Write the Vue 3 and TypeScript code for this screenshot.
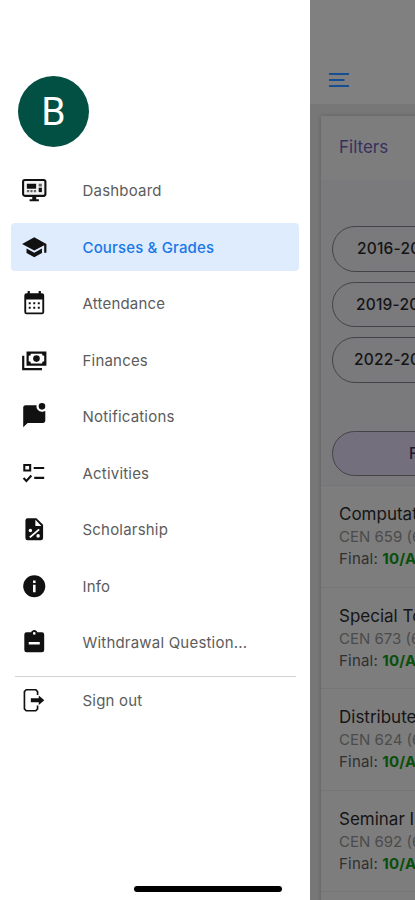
<script setup lang="ts">
interface MenuItem {
  label: string
  icon: string
  active?: boolean
}

interface Course {
  title: string
  code: string
  grade: string
}

const menu: MenuItem[] = [
  { label: 'Dashboard', icon: 'dashboard' },
  { label: 'Courses & Grades', icon: 'school', active: true },
  { label: 'Attendance', icon: 'calendar' },
  { label: 'Finances', icon: 'cash' },
  { label: 'Notifications', icon: 'message' },
  { label: 'Activities', icon: 'checklist' },
  { label: 'Scholarship', icon: 'percent' },
  { label: 'Info', icon: 'info' },
  { label: 'Withdrawal Question...', icon: 'clipboard' },
]

const years: string[] = ['2016-20', '2019-20', '2022-20']

const courses: Course[] = [
  { title: 'Computat', code: 'CEN 659 (6', grade: '10/A' },
  { title: 'Special To', code: 'CEN 673 (6', grade: '10/A' },
  { title: 'Distribute', code: 'CEN 624 (6', grade: '10/A' },
  { title: 'Seminar I', code: 'CEN 692 (6', grade: '10/A' },
]
</script>

<template>
  <div class="screen">
    <aside class="drawer">
      <div class="avatar">B</div>
      <nav class="menu">
        <a v-for="item in menu" :key="item.label" class="item" :class="{ active: item.active }">
          <svg class="icon" viewBox="0 0 24 24">
            <template v-if="item.icon === 'dashboard'">
              <rect x="1.9" y="2.7" width="20.2" height="14.4" rx="1.6" fill="#f4f4f4" stroke="#111" stroke-width="1.9" />
              <path d="M10.200 17h3.600v3.200h2.400v1.700H7.800v-1.700h2.400zM5.300 6h8.400v4.600H5.300z" />
              <path d="M16 6h2.900v2.600H16zM5.300 11.700h2.200v2H5.300zM8.500 11.700h2v2h-2zM11.600 11.700h2.100v2h-2.100z" fill="#666" />
              <path d="M16 9.700h2.900v4H16z" />
            </template>
            <path v-else-if="item.icon === 'school'" d="M12 3 1 9l11 6 9-4.910V17h2V9M5 13.180v4L12 21l7-3.820v-4L12 17z" />
            <template v-else-if="item.icon === 'calendar'">
              <path d="M19 3h-1V1h-2v2H8V1H6v2H5a2 2 0 0 0-2 2v15a2 2 0 0 0 2 2h14a2 2 0 0 0 2-2V5a2 2 0 0 0-2-2m.3 17.300H4.700V8.500h14.600z" />
              <path d="M7 11h1.800v1.800H7zM11.100 11h1.800v1.800h-1.800zM15.200 11H17v1.800h-1.800zM7 15.200h1.800V17H7zM11.100 15.200h1.800V17h-1.800zM15.200 15.200H17V17h-1.800z" />
            </template>
            <template v-else-if="item.icon === 'cash'">
              <path d="M5 4h18v13H5zM1 8h2v11h16v2H1z" />
              <path d="M9 6a2 2 0 0 1-2 2v5a2 2 0 0 1 2 2h10a2 2 0 0 1 2-2V8a2 2 0 0 1-2-2z" fill="#fff" />
              <circle cx="14" cy="10.500" r="3" />
            </template>
            <path v-else-if="item.icon === 'message'" d="M22 7v9c0 1.100-.9 2-2 2H6l-4 4V4c0-1.100.9-2 2-2h10.100a5 5 0 0 0 4.900 6c1.100 0 2.200-.4 3-1M16 3a3 3 0 1 0 6 0 3 3 0 1 0-6 0" />
            <path v-else-if="item.icon === 'checklist'" d="M3 4.500h5.300v5H3zM11.500 7.200H21M12 16.200h9M2.300 16.300l2.600 2.700 4.500-5" fill="none" stroke="#111" stroke-width="1.900" />
            <path v-else-if="item.icon === 'percent'" fill-rule="evenodd" d="M14 2H6a2 2 0 0 0-2 2v16a2 2 0 0 0 2 2h12a2 2 0 0 0 2-2V8zm-1 7V3.500L18.500 9zM8.500 11.500a1.600 1.600 0 1 0 0 3.200 1.600 1.600 0 0 0 0-3.200M15.900 11.500l1.100 1.100-8.400 7.400-1.200-1.100zM15.500 16.400a1.600 1.600 0 1 0 0 3.200 1.600 1.600 0 0 0 0-3.200" />
            <template v-else-if="item.icon === 'info'">
              <circle cx="12" cy="12" r="10" />
              <path d="M10.900 6.700h2.300v2.300h-2.300zM10.900 10.700h2.300v6.700h-2.300z" fill="#fff" />
            </template>
            <path v-else fill-rule="evenodd" d="M19 3h-4.180C14.400 1.840 13.300 1 12 1s-2.400.840-2.820 2H5a2 2 0 0 0-2 2v14a2 2 0 0 0 2 2h14a2 2 0 0 0 2-2V5a2 2 0 0 0-2-2m-7-.2a1.200 1.200 0 1 1 0 2.400 1.200 1.200 0 0 1 0-2.400M7 11.700h10v2.300H7z" />
          </svg>
          <span>{{ item.label }}</span>
        </a>
      </nav>
      <hr class="divider" />
      <a class="item signout">
        <svg class="icon" viewBox="0 0 24 24">
          <path d="M15 7.300V4.200L13.400 2.500H4.700L3.100 4.200v15.600l1.600 1.700h8.700l1.600-1.700v-3.100" fill="none" stroke="#111" stroke-width="1.500" />
          <path d="M8.900 10.300h7.200V7.800l5 4.200-5 4.200v-2.500H8.900z" />
        </svg>
        <span>Sign out</span>
      </a>
      <div class="home-bar"></div>
    </aside>

    <main class="page">
      <header class="topbar">
        <svg class="burger" viewBox="0 0 20 14">
          <path d="M0 1h20M0 7h15.500M0 13h20" stroke="#154f91" stroke-width="2" />
        </svg>
      </header>
      <section class="card">
        <h2 class="filters">Filters</h2>
        <div class="years">
          <button v-for="(year, i) in years" :key="year" class="pill" :class="'pill-' + i">{{ year }}</button>
          <button class="pill apply">F</button>
        </div>
        <article v-for="course in courses" :key="course.code" class="course">
          <h3>{{ course.title }}</h3>
          <p class="code">{{ course.code }}</p>
          <p class="final">Final: <b>{{ course.grade }}</b></p>
        </article>
      </section>
    </main>
  </div>
</template>

<style>
body {
  overflow: hidden;
}
</style>

<style scoped>
.screen {
  display: flex;
  width: 415px;
  height: 900px;
  overflow: hidden;
  background: #fff;
  font-family: Inter, "Liberation Sans", sans-serif;
}
.drawer {
  box-sizing: border-box;
  display: flex;
  flex-direction: column;
  flex: 0 0 310px;
  padding: 76px 11px 0;
  background: #fff;
}
.avatar {
  display: grid;
  place-items: center;
  width: 71px;
  height: 71px;
  margin-left: 7px;
  border-radius: 50%;
  background: #025043;
  color: #fff;
  font: 400 39px Roboto, sans-serif;
}
.menu {
  display: flex;
  flex-direction: column;
  gap: 8.500px;
  margin-top: 19.500px;
}
.item {
  display: flex;
  align-items: center;
  gap: 35.500px;
  flex: 0 0 48px;
  height: 48px;
  padding-left: 9.500px;
  border-radius: 4px;
  color: #5c5c5c;
  font-size: 15px;
  font-weight: 400;
  letter-spacing: 0.2px;
  white-space: nowrap;
}
.active {
  background: #dfecfd;
  color: #1878e8;
  font-weight: 500;
  letter-spacing: 0.150px;
}
.icon {
  flex: none;
  width: 26.500px;
  height: 26.500px;
  fill: #111;
}
.divider {
  flex: none;
  width: 281px;
  height: 1px;
  margin: 9px 0 0 4px;
  border: 0;
  background: #d2d2d2;
}
.home-bar {
  width: 148px;
  height: 6px;
  margin: auto 17px 8px auto;
  border-radius: 3px;
  background: #000;
}
.page {
  flex: 0 0 105px;
  overflow: hidden;
  background: #777;
}
.topbar {
  box-sizing: border-box;
  height: 104px;
  padding: 73px 0 0 19px;
  background: #808080;
}
.burger {
  display: block;
  width: 20px;
  height: 14px;
}
.card {
  width: 380px;
  height: 800px;
  margin: 12px 0 0 11px;
  background: #7d7d7d;
  box-shadow: 0 0 4px rgba(0, 0, 0, 0.22);
  overflow: hidden;
}
.filters {
  height: 64px;
  margin: 0;
  padding-left: 18px;
  color: #37305d;
  font-size: 17px;
  font-weight: 400;
  line-height: 62px;
}
.years {
  box-sizing: border-box;
  display: flex;
  flex-direction: column;
  gap: 10px;
  height: 306px;
  padding: 46px 0 0 11px;
  border-bottom: 1px solid #757575;
  background: #7a7a7c;
}
.pill {
  box-sizing: border-box;
  flex: none;
  width: 180px;
  height: 45.500px;
  padding: 0 0 0 24px;
  border: 1px solid #444448;
  border-radius: 23px;
  background: transparent;
  color: #141416;
  font: 500 15.500px Inter, sans-serif;
  letter-spacing: 0.2px;
  text-align: left;
}
.pill-1 {
  padding-left: 23px;
}
.pill-2 {
  padding-left: 21px;
}
.apply {
  margin-top: 38px;
  padding-left: 76px;
  background: #746f7c;
  color: #1e1735;
}
.course {
  box-sizing: border-box;
  height: 101.500px;
  padding: 17px 0 0 18px;
  border-bottom: 1px solid #757575;
  white-space: nowrap;
}
.course h3,
.course p {
  margin: 0;
  font-weight: 400;
}
.course h3 {
  color: #151515;
  font-size: 17px;
  line-height: 23px;
}
.course p {
  font-size: 15px;
  line-height: 22px;
}
.course .code {
  color: #4b4b4b;
}
.course .final {
  color: #303030;
  letter-spacing: 0.2px;
}
.final b {
  color: #084f0b;
  font-weight: 700;
}
</style>
